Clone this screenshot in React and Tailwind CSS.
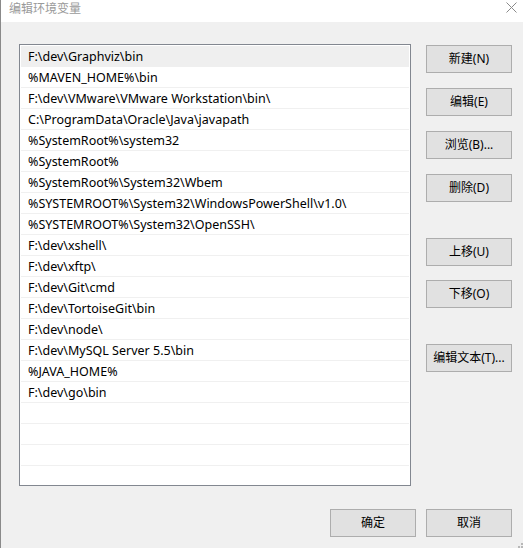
import { useState } from 'react';

const paths = [
    'F:\\dev\\Graphviz\\bin',
    '%MAVEN_HOME%\\bin',
    'F:\\dev\\VMware\\VMware Workstation\\bin\\',
    'C:\\ProgramData\\Oracle\\Java\\javapath',
    '%SystemRoot%\\system32',
    '%SystemRoot%',
    '%SystemRoot%\\System32\\Wbem',
    '%SYSTEMROOT%\\System32\\WindowsPowerShell\\v1.0\\',
    '%SYSTEMROOT%\\System32\\OpenSSH\\',
    'F:\\dev\\xshell\\',
    'F:\\dev\\xftp\\',
    'F:\\dev\\Git\\cmd',
    'F:\\dev\\TortoiseGit\\bin',
    'F:\\dev\\node\\',
    'F:\\dev\\MySQL Server 5.5\\bin',
    '%JAVA_HOME%',
    'F:\\dev\\go\\bin',
];

const rows = [...paths, '', '', '', '', ''];

function Btn({ children, className = '' }) {
    return (
        <button className={`h-[28px] w-[86px] border border-[#adadad] bg-[#e1e1e1] text-[12px] text-black ${className}`}>
            {children}
        </button>
    );
}

export default function App() {
    const [selected, setSelected] = useState(0);

    return (
        <div
            className="relative h-[548px] w-[523px] overflow-hidden border-l border-[#8a8a8a] bg-[#f0f0f0] text-black"
            style={{ fontFamily: '"Noto Sans", "Noto Sans CJK SC", sans-serif' }}
        >
            {/* Title bar */}
            <div className="flex h-[22px] items-start justify-between bg-white pl-[8px] pr-[6px] pt-[1px]">
                <span className="text-[12px] leading-[16px] text-[#9a9a9a]">编辑环境变量</span>
                <svg width="11" height="11" viewBox="0 0 11 11" className="mt-[1px]">
                    <path d="M0.5 0.5 L10.5 10.5 M10.5 0.5 L0.5 10.5" stroke="#8a8a8a" strokeWidth="1" />
                </svg>
            </div>

            <div className="flex pl-[18px] pt-[22px]">
                {/* Path list */}
                <div className="h-[442px] w-[392px] overflow-hidden border border-[#828790] bg-white p-px">
                    {rows.map((p, i) => (
                        <div
                            key={i}
                            onClick={() => p && setSelected(i)}
                            className={`flex h-[21px] items-center border-b pl-[7px] pt-[3px] text-[12.5px] leading-none ${
                                selected === i ? 'border-[#efefef] bg-[#efefef]' : 'border-[#f0f0f0]'
                            }`}
                        >
                            {p}
                        </div>
                    ))}
                </div>

                {/* Side buttons */}
                <div className="ml-[15px] flex flex-col pt-px">
                    <Btn>新建(N)</Btn>
                    <Btn className="mt-[15px]">编辑(E)</Btn>
                    <Btn className="mt-[15px]">浏览(B)...</Btn>
                    <Btn className="mt-[15px]">删除(D)</Btn>
                    <Btn className="mt-[36px]">上移(U)</Btn>
                    <Btn className="mt-[14px]">下移(O)</Btn>
                    <Btn className="mt-[36px]">编辑文本(T)...</Btn>
                </div>
            </div>

            {/* Bottom buttons */}
            <div className="mt-[23px] flex justify-end gap-[10px] pr-[11px]">
                <Btn>确定</Btn>
                <Btn>取消</Btn>
            </div>

            {/* size grip */}
            <div className="absolute bottom-0 right-0 flex flex-col items-end gap-px">
                <div className="h-[2px] w-[2px] bg-[#b8b8b8]" />
                <div className="flex gap-px">
                    <div className="h-[2px] w-[2px] bg-[#b8b8b8]" />
                    <div className="h-[2px] w-[2px] bg-[#b8b8b8]" />
                </div>
            </div>
        </div>
    );
}
